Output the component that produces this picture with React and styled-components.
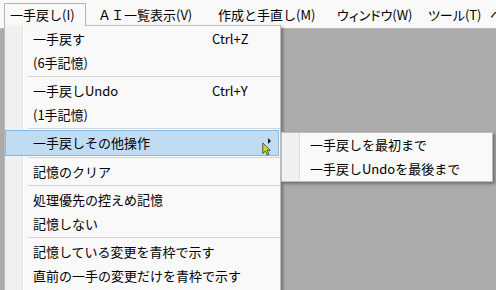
import React from "react";
import styled, { createGlobalStyle } from "styled-components";

const GlobalStyle = createGlobalStyle`
  html, body {
    margin: 0;
    padding: 0;
  }
  body {
    width: 496px;
    height: 290px;
    overflow: hidden;
    font-family: "Noto Sans CJK JP", "Noto Sans", sans-serif;
    font-size: 13px;
    color: #000;
  }
`;

const topMenus = [
  { label: "一手戻し(I)", w: 82, open: true },
  { label: "ＡＩ一覧表示(V)", w: 114 },
  { label: "作成と手直し(M)", w: 113 },
  { label: "ウィンドウ(W)", w: 85, kana: true },
  { label: "ツール(T)", w: 56, kana: true },
  { label: "ヘルプ(H)", w: 70, kana: true },
];

const undoMenu = [
  { label: "一手戻す", key: "Ctrl+Z" },
  { label: "(6手記憶)" },
  { sep: true },
  { label: "一手戻しUndo", key: "Ctrl+Y" },
  { label: "(1手記憶)" },
  { sep: true },
  {
    label: "一手戻しその他操作",
    active: true,
    sub: ["一手戻しを最初まで", "一手戻しUndoを最後まで"],
  },
  { sep: true },
  { label: "記憶のクリア" },
  { sep: true },
  { label: "処理優先の控えめ記憶" },
  { label: "記憶しない" },
  { sep: true },
  { label: "記憶している変更を青枠で示す" },
  { label: "直前の一手の変更だけを青枠で示す" },
];

function App() {
  return (
    <>
      <GlobalStyle />
      <Window>
        <MenuBar>
          {topMenus.map((m) => (
            <TopItem key={m.label} $w={m.w} $open={m.open} $kana={m.kana}>
              {m.label}
              {m.open && (
                <Dropdown>
                  {undoMenu.map((item, i) =>
                    item.sep ? (
                      <Sep key={i} />
                    ) : (
                      <Row key={i} $active={item.active}>
                        <Label>{item.label}</Label>
                        {item.key && <Shortcut>{item.key}</Shortcut>}
                        {item.sub && (
                          <>
                            <Arrow />
                            <Cursor viewBox="0 0 12 18" width="9" height="14">
                              <path
                                d="M1 1 L1 15 L4.5 11.8 L7 17 L9.2 16 L6.8 10.8 L11 10.8 Z"
                                fill="#c9dc1e"
                                stroke="#2a2a2a"
                                strokeWidth="1"
                                strokeLinejoin="round"
                              />
                            </Cursor>
                            <SubMenu>
                              {item.sub.map((s) => (
                                <SubRow key={s}>{s}</SubRow>
                              ))}
                            </SubMenu>
                          </>
                        )}
                      </Row>
                    )
                  )}
                </Dropdown>
              )}
            </TopItem>
          ))}
        </MenuBar>
        <Workspace />
      </Window>
    </>
  );
}

export default App;

const Window = styled.div`
  width: 496px;
  height: 290px;
  display: flex;
  flex-direction: column;
  position: relative;
  overflow: hidden;
`;

const MenuBar = styled.div`
  height: 28px;
  flex: none;
  box-sizing: border-box;
  padding: 3px 0 0 4px;
  display: flex;
  gap: 6px;
  background: #f9f9f9;
`;

const TopItem = styled.div`
  position: relative;
  flex: none;
  box-sizing: border-box;
  width: ${(p) => p.$w}px;
  height: 23px;
  padding-left: 5px;
  border: 1px solid transparent;
  border-bottom: none;
  line-height: 22px;
  white-space: nowrap;
  font-feature-settings: ${(p) => (p.$kana ? '"palt"' : "normal")};
  ${(p) =>
    p.$open &&
    `
    border-color: #b4b4b4;
    background: #f9f9f9;
    &::after {
      content: "";
      position: absolute;
      left: 0;
      right: 0;
      top: 21px;
      height: 1px;
      background: #f9f9f9;
      z-index: 3;
    }
  `}
`;

const menuBg = `linear-gradient(
  to right,
  #f0f0f0 0,
  #f0f0f0 17px,
  #e2e2e2 17px,
  #e2e2e2 18px,
  #ffffff 18px,
  #ffffff 19px,
  #f9f9f9 19px
)`;

const Dropdown = styled.div`
  position: absolute;
  left: -1px;
  top: 21px;
  z-index: 2;
  width: 277px;
  box-sizing: border-box;
  padding: 1.25px 0 3px;
  border: 1px solid #bcbcbc;
  background: ${menuBg};
  box-shadow: 2px 2px 3px rgba(0, 0, 0, 0.35);
  font-feature-settings: normal;
`;

const Row = styled.div`
  position: relative;
  display: flex;
  align-items: center;
  box-sizing: border-box;
  height: 23.5px;
  margin-right: 1px;
  padding: 0 27px 0 28px;
  white-space: nowrap;
  ${(p) =>
    p.$active &&
    `
    height: 25.5px;
    margin: -1px 1px -1px 0;
    padding-left: 27px;
    background: #c0dcf3;
    border: 1px solid #82b7e6;
  `}
`;

const Label = styled.span`
  flex: 1;
`;

const Shortcut = styled.span`
  width: 40px;
  flex: none;
`;

const Sep = styled.div`
  height: 5px;
  margin-left: 23px;
  background: linear-gradient(#d5d5d5, #d5d5d5) center / 100% 1px no-repeat;
`;

const Arrow = styled.span`
  position: absolute;
  right: 7px;
  top: 7px;
  width: 0;
  height: 0;
  border-top: 3px solid transparent;
  border-bottom: 3px solid transparent;
  border-left: 3px solid #1a1a1a;
`;

const Cursor = styled.svg`
  position: absolute;
  left: 256px;
  top: 11px;
  z-index: 5;
`;

const SubMenu = styled.div`
  position: absolute;
  left: 275px;
  top: 1px;
  z-index: 4;
  width: 212px;
  box-sizing: border-box;
  border: 1px solid #bcbcbc;
  background: ${menuBg};
  box-shadow: 2px 2px 3px rgba(0, 0, 0, 0.35);
`;

const SubRow = styled.div`
  display: flex;
  align-items: center;
  height: 24px;
  padding-left: 28px;
  white-space: nowrap;
`;

const Workspace = styled.div`
  flex: 1;
  background: #ababab;
  border-top: 1px dotted #c6c6c6;
`;
